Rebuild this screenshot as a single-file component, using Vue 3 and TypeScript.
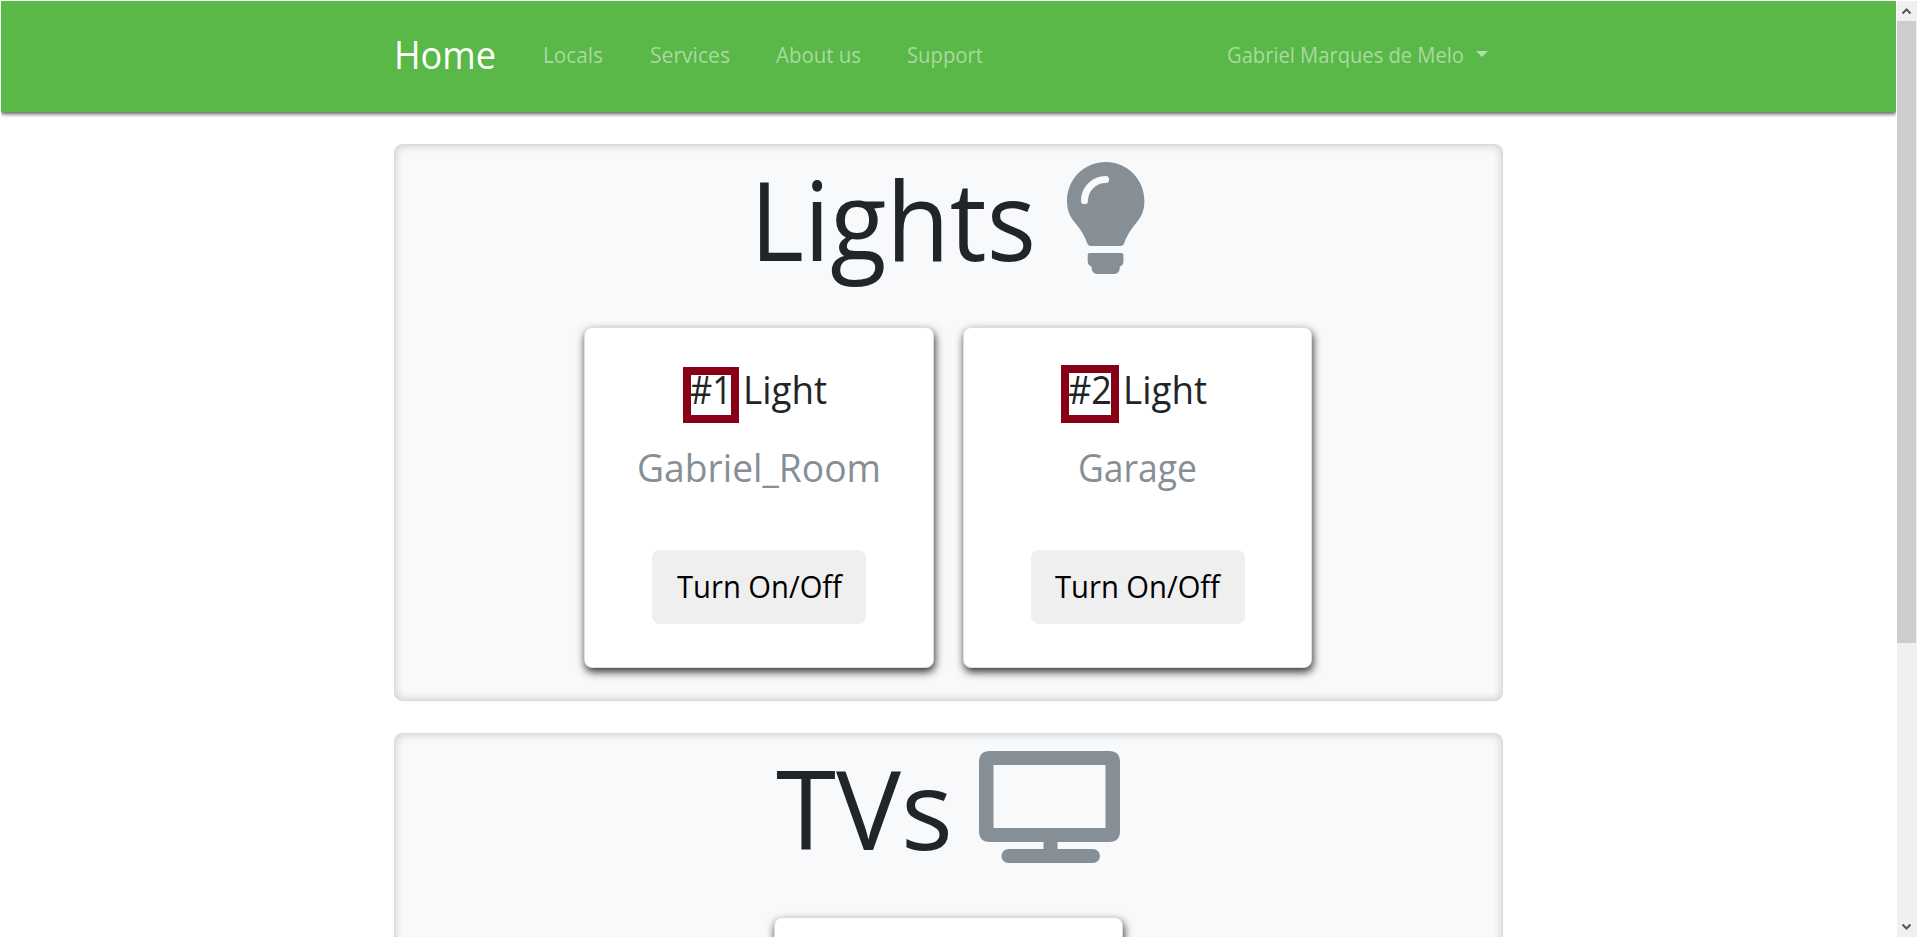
<script setup lang="ts">
import type { Directive } from 'vue'

interface NavLink { label: string; width: number; gap: number }
interface Light { id: number; tagWidth: number; name: string; nameWidth: number }

const links: NavLink[] = [
  { label: 'Locals', width: 60, gap: 47 },
  { label: 'Services', width: 80, gap: 46 },
  { label: 'About us', width: 85, gap: 46 },
  { label: 'Support', width: 76, gap: 0 },
]

const lights: Light[] = [
  { id: 1, tagWidth: 42, name: 'Gabriel_Room', nameWidth: 244 },
  { id: 2, tagWidth: 44, name: 'Garage', nameWidth: 119 },
]

// Condenses a label horizontally so that it takes up exactly the given width.
const vFit: Directive<HTMLElement, number> = {
  mounted(el, { value }) {
    const natural = el.getBoundingClientRect().width
    el.style.transform = `scaleX(${value / natural})`
    el.style.marginRight = `${value - natural}px`
  },
}
</script>

<template>
  <div class="window">
    <div class="page">
      <header class="navbar">
        <div class="container nav-row">
          <a class="brand"><span v-fit="102" class="fit">Home</span></a>
          <nav class="links">
            <a v-for="l in links" :key="l.label" class="link" :style="{ marginRight: l.gap + 'px' }">
              <span v-fit="l.width" class="fit">{{ l.label }}</span>
            </a>
          </nav>
          <a class="link user"><span v-fit="237" class="fit">Gabriel Marques de Melo</span><i class="caret"></i></a>
        </div>
      </header>

      <main class="container">
        <section class="panel lights">
          <h1 class="title">
            <span v-fit="286" class="fit">Lights</span>
            <svg class="bulb" viewBox="0 0 77.4 112">
              <path fill="#868e96" d="M38.7 0C17.3 0 0 17.3 0 38.7C0 48 2.6 54 7.4 60C13.5 67.5 17.3 73 20.1 81Q21.2 84 24 84H53.4Q56.2 84 57.3 81C60.1 73 63.9 67.5 70 60C74.8 54 77.4 48 77.4 38.7C77.4 17.3 60.1 0 38.7 0ZM22.7 91H54.4Q56.4 91 56.4 93V99.5Q56.4 103 52.9 104.5Q52.9 112 47 112H30.2Q24.5 112 24.5 104.5Q20.7 103 20.7 99.5V93Q20.7 91 22.7 91Z" />
              <path fill="none" stroke="#f8f9fb" stroke-width="7" stroke-linecap="round" d="M38.7 17.5A21.2 21.2 0 0 0 17.5 38.7" />
            </svg>
          </h1>
          <div class="cards">
            <article v-for="l in lights" :key="l.id" class="card">
              <h2 class="heading">
                <span class="tag" :class="'tag-' + l.id"><span v-fit="l.tagWidth" class="fit">#{{ l.id }}</span></span>
                <span v-fit="84" class="fit">Light</span>
              </h2>
              <p class="name"><span v-fit="l.nameWidth" class="fit">{{ l.name }}</span></p>
              <button class="toggle"><span v-fit="165" class="fit">Turn On/Off</span></button>
            </article>
          </div>
        </section>

        <section class="panel tvs">
          <h1 class="title">
            <span v-fit="177" class="fit">TVs</span>
            <svg class="tv" viewBox="0 0 141 112" fill="#868e96">
              <path fill-rule="evenodd" d="M11 0H130Q141 0 141 11V80Q141 91 130 91H78.5V98H114A7 7 0 0 1 114 112H29.5A7 7 0 0 1 29.5 98H64.5V91H11Q0 91 0 80V11Q0 0 11 0ZM14.5 14V77H126.5V14Z" />
            </svg>
          </h1>
          <div class="cards">
            <article class="card"></article>
          </div>
        </section>
      </main>
    </div>

    <aside class="scrollbar">
      <svg class="arrow" viewBox="0 0 20 20"><path d="M5.5 12.5L9.5 8.5L13.5 12.5" /></svg>
      <div class="thumb"></div>
      <svg class="arrow bottom" viewBox="0 0 20 20"><path d="M5.5 7.5L9.5 11.5L13.5 7.5" /></svg>
    </aside>
  </div>
</template>

<style>
body {
  margin: 0;
  background: #fff;
  overflow: hidden;
}
</style>

<style scoped>
.window {
  box-sizing: border-box;
  width: 1920px;
  height: 952px;
  padding: 1px 3px 15px 1px;
  display: flex;
  background: #fff;
  font-family: "Open Sans", "Noto Sans", sans-serif;
  color: #212529;
}
.page {
  width: 1895px;
  height: 936px;
  overflow: hidden;
}
.container {
  width: 1109px;
  margin-left: 393px;
}
.navbar {
  height: 111px;
  background: #59b847;
  box-shadow: 0 2px 4px rgba(0, 0, 0, .65);
}
.nav-row {
  display: flex;
  align-items: flex-start;
}
.fit {
  display: inline-block;
  white-space: nowrap;
  transform-origin: left center;
}
.brand {
  width: 149px;
  font-size: 39px;
  line-height: 105px;
  color: #fff;
}
.links {
  display: flex;
  width: 684px;
}
.link {
  font-size: 21.5px;
  line-height: 108px;
  color: #a8daa0;
  white-space: nowrap;
}
.user {
  display: flex;
  align-items: center;
}
.caret {
  margin: 0 0 2px 12px;
  border: 6px solid transparent;
  border-top-color: #b4deac;
  border-bottom: 0;
}
.panel {
  box-sizing: border-box;
  height: 557px;
  margin-top: 32px;
  border: 1px solid #d9dadb;
  border-radius: 8px;
  background: #f8f9fb;
  box-shadow: inset 0 0 10px rgba(0, 0, 0, .2);
}
.title {
  display: flex;
  justify-content: center;
  align-items: flex-start;
  height: 182px;
  margin: 0;
  padding-right: 2px;
  font-size: 109px;
  font-weight: 400;
  line-height: 147px;
}
.bulb {
  width: 77.4px;
  height: 112px;
  margin: 17px 0 0 31px;
}
.tv {
  width: 141px;
  height: 112px;
  margin: 17px 0 0 26px;
}
.cards {
  display: flex;
  justify-content: center;
  gap: 29px;
  padding-right: 1px;
}
.tvs .cards {
  padding-top: 1px;
}
.card {
  box-sizing: border-box;
  width: 350px;
  height: 341px;
  border: 1px solid #dedede;
  border-radius: 8px;
  background: #fff;
  box-shadow: 1px 4px 9px rgba(0, 0, 0, .8);
  display: flex;
  flex-direction: column;
  align-items: center;
}
.card + .card,
.tvs .card {
  width: 349px;
}
.heading {
  display: flex;
  justify-content: center;
  gap: 11px;
  margin: 34px 0 0;
  padding-right: 1px;
  font-size: 39px;
  font-weight: 400;
  line-height: 54px;
}
.tag {
  position: relative;
}
.tag::before {
  content: "";
  position: absolute;
  box-sizing: border-box;
  left: -7px;
  bottom: -7px;
  width: 56px;
  height: 56px;
  border: 8px solid #880015;
}
.tag-2::before {
  width: 58px;
  height: 58px;
}
.name {
  margin: 24px 0 0;
  font-size: 39px;
  line-height: 54px;
  color: #868e96;
}
.toggle {
  width: 214px;
  height: 74px;
  margin: 56px 0 0;
  padding: 0 0 3px;
  border: 0;
  border-radius: 8px;
  background: #efefef;
  font: inherit;
  font-size: 31px;
  color: #000;
}
.scrollbar {
  width: 20px;
  height: 936px;
  margin-left: 1px;
  background: #f0f0f0;
  display: flex;
  flex-direction: column;
}
.thumb {
  width: 19px;
  height: 622px;
  background: #cdcdcd;
}
.arrow {
  width: 20px;
  height: 20px;
  fill: none;
  stroke: #555;
  stroke-width: 2;
}
.bottom {
  margin-top: auto;
}
</style>
